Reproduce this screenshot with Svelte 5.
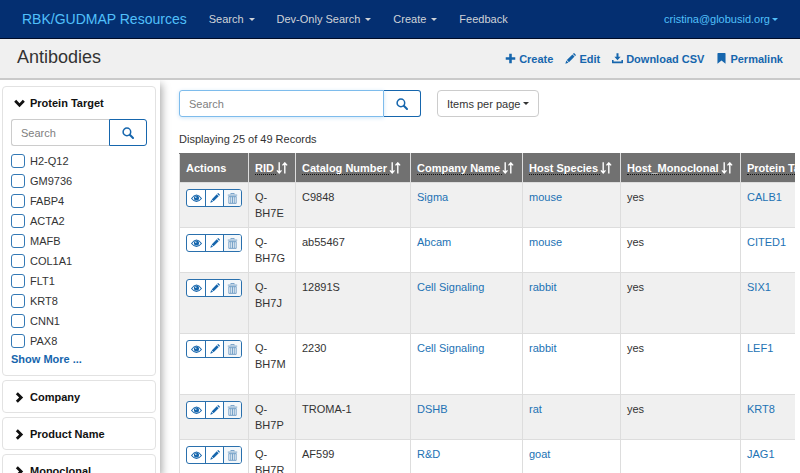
<script>
  const menus = [
    { label: 'Search', caret: true },
    { label: 'Dev-Only Search', caret: true },
    { label: 'Create', caret: true },
    { label: 'Feedback', caret: false }
  ];
  const actions = [
    { label: 'Create', icon: 'plus' },
    { label: 'Edit', icon: 'pencil' },
    { label: 'Download CSV', icon: 'download' },
    { label: 'Permalink', icon: 'bookmark' }
  ];
  const targets = ['H2-Q12', 'GM9736', 'FABP4', 'ACTA2', 'MAFB', 'COL1A1', 'FLT1', 'KRT8', 'CNN1', 'PAX8'];
  const closedFacets = ['Company', 'Product Name', 'Monoclonal'];
  const columns = ['RID', 'Catalog Number', 'Company Name', 'Host Species', 'Host_Monoclonal', 'Protein Target'];
  const rows = [
    { rid: 'Q-BH7E', catalog: 'C9848', company: 'Sigma', species: 'mouse', mono: 'yes', target: 'CALB1' },
    { rid: 'Q-BH7G', catalog: 'ab55467', company: 'Abcam', species: 'mouse', mono: 'yes', target: 'CITED1' },
    { rid: 'Q-BH7J', catalog: '12891S', company: 'Cell Signaling', species: 'rabbit', mono: 'yes', target: 'SIX1', tall: true },
    { rid: 'Q-BH7M', catalog: '2230', company: 'Cell Signaling', species: 'rabbit', mono: 'yes', target: 'LEF1', tall: true },
    { rid: 'Q-BH7P', catalog: 'TROMA-1', company: 'DSHB', species: 'rat', mono: 'yes', target: 'KRT8' },
    { rid: 'Q-BH7R', catalog: 'AF599', company: 'R&D', species: 'goat', mono: '', target: 'JAG1' }
  ];
</script>

{#snippet icon(name, size)}
  <svg class="icon" width={size} height={size} viewBox="0 0 12 12" aria-hidden="true">
    {#if name === 'plus'}
      <path d="M4.6.8h2.8v3.8h3.8v2.8H7.4v3.8H4.6V7.4H.8V4.6h3.8z" />
    {:else if name === 'pencil'}
      <path d="M0.4 11.6l1-3.3 2.3 2.3zM2 7.7L8.1 1.6l2.3 2.3L4.3 10zM8.7 1l.7-.7q.4-.4.8 0l1.5 1.5q.4.4 0 .8l-.7.7z" />
    {:else if name === 'download'}
      <path d="M4.9.2h2.2v4h2.3L6 7.9 2.6 4.2h2.3zM0 7.5h1.7v1.8h8.6V7.5H12v3q0 .7-.7.7H.7q-.7 0-.7-.7z" />
    {:else if name === 'bookmark'}
      <path d="M1.6.7q0-.6.6-.6h7.6q.6 0 .6.6v11L6 8.1l-4.4 3.6z" />
    {:else if name === 'search'}
      <circle cx="4.9" cy="4.9" r="3.8" fill="none" stroke="currentColor" stroke-width="1.5" />
      <path d="M7.8 7.8l3.2 3.2" stroke="currentColor" stroke-width="2" stroke-linecap="round" />
    {:else if name === 'eye'}
      <path d="M.6 6Q6-1.4 11.4 6 6 12.6.6 6z" fill="none" stroke="currentColor" stroke-width="1.1" />
      <circle cx="6" cy="5.4" r="2.8" />
      <circle cx="5.2" cy="4.5" r=".8" fill="#fff" />
    {:else if name === 'trash'}
      <path d="M4.2 1.4V.5h3.6v.9M.9 2.3h10.2M2 3.7v7.6h8V3.7M2 4h8M4.1 4v7M6 4v7M7.9 4v7" fill="none" stroke="currentColor" stroke-width=".9" />
    {:else if name === 'down'}
      <path d="M2.4 2L6 5.6 9.6 2l2.2 2.2L6 10 .2 4.2z" />
    {:else if name === 'right'}
      <path d="M2 2.4L5.6 6 2 9.6l2.2 2.2L10 6 4.2.2z" />
    {:else if name === 'sort'}
      <path d="M3.2.3v10.5M.9 8.4l2.3 2.5 2.3-2.5M8.8 11.6V1M6.5 3.4L8.8.9l2.3 2.5" fill="none" stroke="currentColor" stroke-width="1.4" />
    {/if}
  </svg>
{/snippet}

<div class="app">
  <header class="navbar">
    <a class="brand" href="#home">RBK/GUDMAP Resources</a>
    <nav>
      {#each menus as menu}
        {#if menu.caret}
          <button type="button" class="menu">{menu.label}<span class="caret"></span></button>
        {:else}
          <a class="menu" href="#feedback">{menu.label}</a>
        {/if}
      {/each}
    </nav>
    <button type="button" class="menu user">cristina@globusid.org<span class="caret"></span></button>
  </header>

  <div class="titlebar">
    <h1>Antibodies</h1>
    <div class="actions">
      {#each actions as action}
        <a href="#{action.icon}">{@render icon(action.icon, 11)}{action.label}</a>
      {/each}
    </div>
  </div>

  <div class="body">
    <aside>
      <section class="facet">
        <button type="button" class="facet-title">{@render icon('down', 11)}Protein Target</button>
        <form class="search" role="search">
          <input type="search" placeholder="Search" aria-label="Search protein targets" />
          <button type="button" aria-label="Find target">{@render icon('search', 12)}</button>
        </form>
        <ul>
          {#each targets as target}
            <li><label><input type="checkbox" />{target}</label></li>
          {/each}
        </ul>
        <a class="more" href="#more">Show More ...</a>
      </section>
      {#each closedFacets as facet}
        <section class="facet closed">
          <button type="button" class="facet-title">{@render icon('right', 11)}{facet}</button>
        </section>
      {/each}
    </aside>

    <main>
      <div class="tools">
        <form class="search wide" role="search">
          <input type="search" placeholder="Search" aria-label="Search records" />
          <button type="button" aria-label="Find records">{@render icon('search', 12)}</button>
        </form>
        <div class="page-size">
          <select aria-label="Items per page">
            <option>Items per page</option>
          </select>
          <span class="caret"></span>
        </div>
      </div>
      <p>Displaying 25 of 49 Records</p>
      <div class="table-wrap">
        <table>
          <colgroup>
            <col class="c-actions" /><col class="c-rid" /><col class="c-catalog" /><col class="c-company" />
            <col class="c-species" /><col class="c-mono" /><col class="c-target" />
          </colgroup>
          <thead>
            <tr>
              <th>Actions</th>
              {#each columns as column}
                <th><span class="column">{column}</span>{@render icon('sort', 12)}</th>
              {/each}
            </tr>
          </thead>
          <tbody>
            {#each rows as row}
              <tr class:tall={row.tall}>
                <td>
                  <div class="row-actions">
                    <button type="button" aria-label="View {row.rid}">{@render icon('eye', 11)}</button>
                    <button type="button" aria-label="Edit {row.rid}">{@render icon('pencil', 10)}</button>
                    <button type="button" class="delete" aria-label="Delete {row.rid}">{@render icon('trash', 11)}</button>
                  </div>
                </td>
                <td>{row.rid}</td>
                <td>{row.catalog}</td>
                <td><a href="#company">{row.company}</a></td>
                <td><a href="#species">{row.species}</a></td>
                <td>{row.mono}</td>
                <td><a href="#target">{row.target}</a></td>
              </tr>
            {/each}
          </tbody>
        </table>
      </div>
    </main>
  </div>
</div>

<style>
  :global(body) { margin: 0; }
  * { box-sizing: border-box; }
  .app {
    height: 100vh;
    display: flex;
    flex-direction: column;
    overflow: hidden;
    background: #fff;
    color: #333;
    font: 11px/16px "Liberation Sans", Arial, sans-serif;
  }
  button, input, select { font: inherit; color: inherit; margin: 0; }
  button { background: none; border: 0; padding: 0; cursor: pointer; }
  a { color: #2272b4; text-decoration: none; }
  .icon { fill: currentColor; flex: none; }
  .caret {
    display: inline-block;
    border: 3px solid transparent;
    border-top-color: currentColor;
    border-bottom: 0;
  }

  .navbar {
    flex: none;
    height: 39px;
    display: flex;
    align-items: center;
    padding: 0 22px;
    background: #042f71;
    border-bottom: 1px solid #000c28;
  }
  .brand { color: #51c0fb; font-size: 14px; white-space: nowrap; }
  nav { display: flex; gap: 22px; margin-left: 22px; }
  .menu { display: flex; align-items: center; color: #d0d3d8; white-space: nowrap; }
  .menu .caret { margin-left: 5px; }
  .user { margin-left: auto; color: #51c0fb; }
  .user .caret { margin-left: 2px; }

  .titlebar {
    flex: none;
    height: 41px;
    display: flex;
    align-items: center;
    justify-content: space-between;
    padding: 0 17px;
    background: #f0f0f0;
    border-bottom: 2px solid #cacaca;
  }
  h1 { margin: 0; font-size: 18px; line-height: 20px; font-weight: 400; padding-bottom: 4px; }
  .actions { display: flex; gap: 12px; font-weight: 700; white-space: nowrap; }
  .actions a { display: flex; align-items: center; gap: 3px; color: #1666ad; }

  .body { flex: 1; min-height: 0; display: flex; overflow: hidden; }
  aside {
    flex: none;
    width: 160px;
    padding: 6px 4px 0 2px;
    overflow: hidden;
    display: flex;
    flex-direction: column;
    gap: 4px;
    box-shadow: 2px 4px 8px #aaa;
  }
  .facet { flex: none; border: 1px solid #e2e2e2; border-radius: 4px; padding: 8px; }
  .facet-title { display: flex; align-items: center; gap: 5px; margin-left: 3px; font-weight: 700; color: #111; }
  .facet .search { margin-top: 8px; }
  .closed { padding: 8px 8px 7px; }

  .search { display: flex; height: 27px; }
  .search input {
    flex: 1;
    min-width: 0;
    padding: 0 9px;
    border: 1px solid #ccc;
    border-right: 0;
    border-radius: 3px 0 0 3px;
    background: #fff;
    appearance: none;
    outline: 0;
  }
  .search input::placeholder { color: #808080; opacity: 1; }
  .search button {
    flex: none;
    width: 38px;
    display: grid;
    place-items: center;
    border: 1px solid #1666ad;
    border-radius: 0 3px 3px 0;
    color: #1666ad;
  }
  ul { list-style: none; margin: 5px 0 0; padding: 0; }
  li { height: 20px; display: flex; align-items: center; }
  label { display: flex; align-items: center; gap: 5px; }
  label input { appearance: none; width: 14px; height: 14px; border: 1px solid #3479b5; border-radius: 3px; background: #fff; }
  .more { display: block; color: #1666ad; font-weight: 700; }

  main { flex: 1; min-width: 0; padding: 10px 5px 0 19px; overflow: hidden; }
  .tools { display: flex; gap: 16px; }
  .wide { width: 242px; }
  .wide input { border: 1px solid #7ebcec; box-shadow: 0 1px 4px #cfe5f7; }
  .wide button { width: 37px; border-left: 0; }
  .page-size { position: relative; height: 27px; }
  .page-size select { appearance: none; width: 102px; height: 27px; padding: 0 9px; border: 1px solid #ccc; border-radius: 4px; background: #fff; }
  .page-size .caret { position: absolute; right: 10px; top: 12px; pointer-events: none; }
  p { margin: 14px 0 6px; }

  .table-wrap { overflow: hidden; }
  table { width: 676px; table-layout: fixed; border-collapse: collapse; }
  .c-actions { width: 69px; }
  .c-rid { width: 47px; }
  .c-catalog { width: 115px; }
  .c-company { width: 112px; }
  .c-species { width: 98px; }
  .c-mono { width: 120px; }
  .c-target { width: 115px; }
  th, td { padding: 6px; text-align: left; vertical-align: top; border: 1px solid #ddd; }
  th { height: 29px; background: #717171; color: #fff; border-top-color: #717171; white-space: nowrap; }
  th .icon { vertical-align: -2px; }
  .column { padding-right: 2px; border-bottom: 1px dotted #111; }
  td { height: 45px; }
  .tall td { height: 61px; }
  tbody tr:nth-child(odd) { background: #f0f0f0; }
  .row-actions { display: inline-flex; height: 18px; border: 1px solid #2a70ad; border-radius: 3px; background: #fff; color: #1666ad; vertical-align: top; }
  .row-actions button { width: 18px; display: grid; place-items: center; }
  .row-actions button + button { border-left: 1px solid #2a70ad; }
  .row-actions .delete { background: #f3f7fa; color: #5e91bf; border-radius: 0 2px 2px 0; }
</style>
